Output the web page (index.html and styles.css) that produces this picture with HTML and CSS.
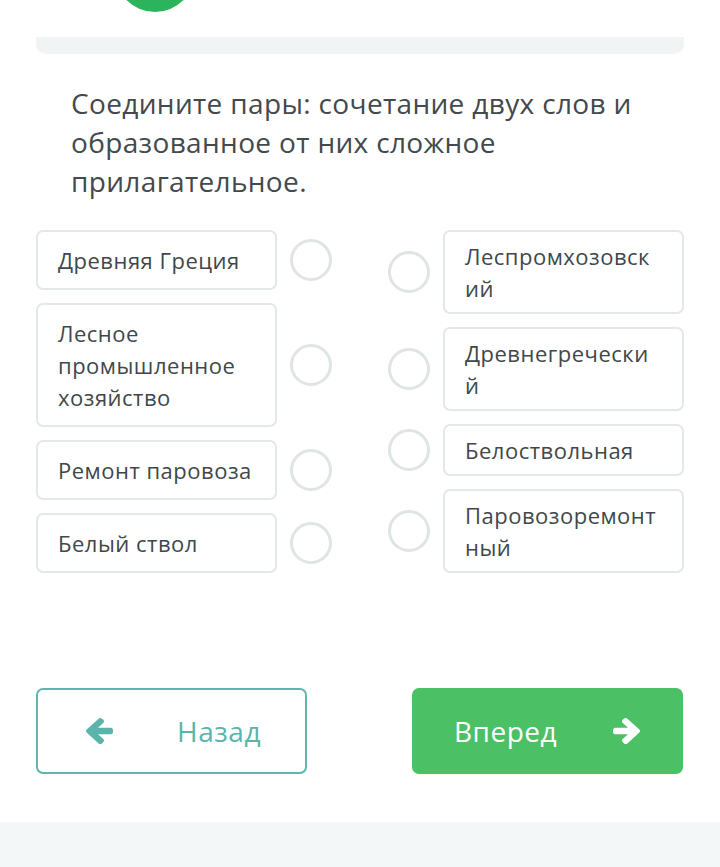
FILE: index.html
```html
<!DOCTYPE html>
<html lang="ru">
<head>
<meta charset="utf-8">
<title>Соедините пары</title>
<link rel="stylesheet" href="styles.css">
</head>
<body>
<div class="page">
  <div class="top">
    <div class="badge"></div>
  </div>
  <div class="bar"></div>
  <h1 class="question">Соедините пары: сочетание двух слов и образованное от них сложное прилагательное.</h1>
  <div class="match">
    <div class="col col-left">
      <div class="row"><div class="card">Древняя Греция</div><span class="dot"></span></div>
      <div class="row"><div class="card">Лесное промышленное хозяйство</div><span class="dot"></span></div>
      <div class="row"><div class="card">Ремонт паровоза</div><span class="dot"></span></div>
      <div class="row"><div class="card">Белый ствол</div><span class="dot"></span></div>
    </div>
    <div class="col col-right">
      <div class="row"><span class="dot"></span><div class="card">Леспромхозовский</div></div>
      <div class="row"><span class="dot"></span><div class="card">Древнегреческий</div></div>
      <div class="row"><span class="dot"></span><div class="card">Белоствольная</div></div>
      <div class="row"><span class="dot"></span><div class="card">Паровозоремонтный</div></div>
    </div>
  </div>
  <div class="nav">
    <button class="btn btn-back">
      <svg class="arrow" viewBox="64 181 1472 1558" width="27" height="26" preserveAspectRatio="none"><path fill="currentColor" d="M1536 896v128q0 53-32.5 90.5t-84.5 37.5h-704l293 294q38 36 38 90t-38 90l-75 76q-37 37-90 37-52 0-91-37l-651-652q-37-37-37-90 0-52 37-91l651-650q38-38 91-38 52 0 90 38l75 74q38 38 38 91t-38 91l-293 293h704q52 0 84.5 37.5t32.5 90.5z"/></svg>
      <span>Назад</span>
    </button>
    <button class="btn btn-next">
      <span>Вперед</span>
      <svg class="arrow" viewBox="64 181 1472 1558" width="27" height="26" preserveAspectRatio="none"><path fill="currentColor" transform="matrix(-1 0 0 1 1600 0)" d="M1536 896v128q0 53-32.5 90.5t-84.5 37.5h-704l293 294q38 36 38 90t-38 90l-75 76q-37 37-90 37-52 0-91-37l-651-652q-37-37-37-90 0-52 37-91l651-650q38-38 91-38 52 0 90 38l75 74q38 38 38 91t-38 91l-293 293h704q52 0 84.5 37.5t32.5 90.5z"/></svg>
    </button>
  </div>
</div>
</body>
</html>
```
FILE: styles.css
```css
* { box-sizing: border-box; }
html, body { margin: 0; padding: 0; }
body {
  background: #f3f7f7;
  font-family: "Open Sans", "Noto Sans", sans-serif;
  color: #42484b;
}
.page {
  background: #fff;
  height: 822px;
  box-shadow: 0 2px 8px rgba(0, 0, 0, 0.12);
  overflow: hidden;
}
.top {
  display: flow-root;
  height: 37px;
  padding-left: 115px;
}
.badge {
  width: 80px;
  height: 80px;
  border-radius: 50%;
  background: #2bb45c;
  margin-top: -68px;
}
.bar {
  margin: 0 36px;
  height: 17px;
  background: #f0f4f4;
  border-radius: 0 0 10px 10px;
}
.question {
  margin: 30px 50px 29px 71px;
  font-size: 28px;
  line-height: 39px;
  font-weight: 400;
  letter-spacing: 0.35px;
  color: #43494c;
}
.match {
  display: flex;
  justify-content: space-between;
  padding: 0 36px;
}
.col {
  display: flex;
  flex-direction: column;
  gap: 13px;
}
.row {
  display: flex;
  align-items: center;
  gap: 13px;
}
.card {
  width: 241px;
  border: 2px solid #e4e8e8;
  border-radius: 7px;
  font-size: 22px;
  line-height: 32px;
  letter-spacing: 0.5px;
  color: #41474a;
  overflow-wrap: anywhere;
}
.col-left .card { padding: 12px 20px; }
.col-right .card { padding: 8px 20px; }
.dot {
  width: 42px;
  height: 42px;
  border-radius: 50%;
  border: 3px solid #dfe4e4;
  flex: none;
}
.col-right .row { padding-left: 1px; }
.nav {
  display: flex;
  justify-content: space-between;
  padding: 115px 37px 0 36px;
}
.btn {
  width: 271px;
  height: 86px;
  border-radius: 7px;
  display: flex;
  align-items: center;
  justify-content: space-between;
  font-family: "Open Sans", "Noto Sans", sans-serif;
  font-size: 28px;
  letter-spacing: 0.5px;
  cursor: pointer;
}
.btn-back {
  background: #fff;
  border: 2px solid #5cb8ad;
  color: #5bb4aa;
  padding: 0 44px 0 48px;
}
.btn-next {
  background: #4cc064;
  border: none;
  color: #fff;
  padding: 0 43px 0 42px;
}
.arrow { display: block; }
```
